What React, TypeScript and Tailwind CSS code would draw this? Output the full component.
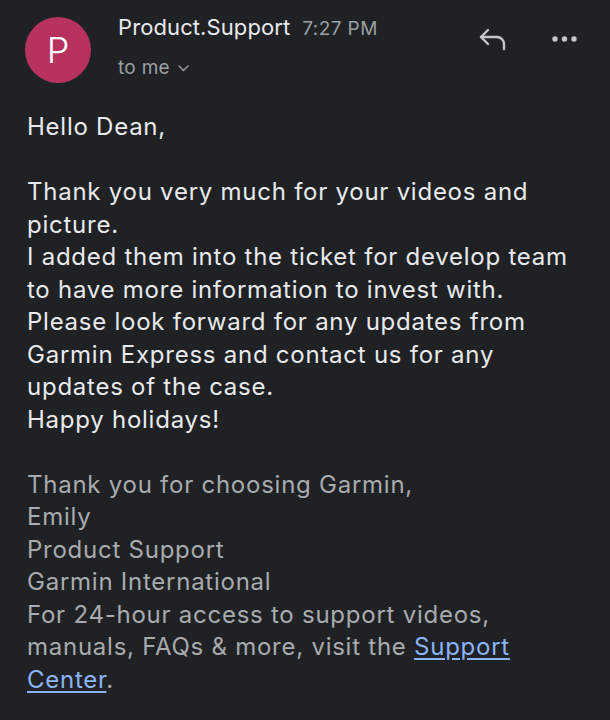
import React from 'react';

// lines as wrapped in the mail client
const body = [
  'Thank you very much for your videos and',
  'picture.',
  'I added them into the ticket for develop team',
  'to have more information to invest with.',
  'Please look forward for any updates from',
  'Garmin Express and contact us for any',
  'updates of the case.',
  'Happy holidays!',
];

const signature = [
  'Thank you for choosing Garmin,',
  'Emily',
  'Product Support',
  'Garmin International',
  'For 24-hour access to support videos,',
];

export default function App() {
  return (
    <div
      className="w-[610px] h-[720px] bg-[#202124] text-[#e8eaed] overflow-hidden"
      style={{ fontFamily: 'Inter, "Noto Sans", sans-serif' }}
    >
      {/* Header */}
      <div className="flex items-start pl-[25px] pr-[33px] pt-[17px]">
        <div className="w-[66px] h-[66px] rounded-full bg-[#b8325f] flex items-center justify-center text-white text-[36px] font-light shrink-0">
          P
        </div>
        <div className="ml-[27px] flex-1 mt-[-6px]">
          <div className="flex items-baseline gap-[12px]">
            <span className="text-[22px] tracking-[0.1px] text-[#e8eaed]">Product.Support</span>
            <span className="text-[19px] tracking-[0.4px] text-[#9aa0a6]">7:27 PM</span>
          </div>
          <div className="flex items-center gap-[8px] mt-[10px] text-[19px] tracking-[0.3px] text-[#9aa0a6]">
            <span>to me</span>
            <svg width="11" height="7" viewBox="0 0 11 7" fill="none">
              <path d="M1 1l4.5 4.5L10 1" stroke="#9aa0a6" strokeWidth="1.4" strokeLinecap="round" strokeLinejoin="round" />
            </svg>
          </div>
        </div>
        <div className="flex items-center gap-[44px] pt-[10px]">
          <svg width="30" height="24" viewBox="0 0 30 24" fill="none">
            <path d="M10 3L3 10l7 7" stroke="#c4c7c5" strokeWidth="2.4" strokeLinecap="round" strokeLinejoin="round" />
            <path d="M3 10h16a7 7 0 0 1 7 7v5" stroke="#c4c7c5" strokeWidth="2.4" strokeLinecap="round" />
          </svg>
          <svg width="25" height="6" viewBox="0 0 25 6" fill="#c4c7c5">
            <circle cx="3" cy="3" r="2.7" />
            <circle cx="12.5" cy="3" r="2.7" />
            <circle cx="22" cy="3" r="2.7" />
          </svg>
        </div>
      </div>

      {/* Body */}
      <div className="pl-[27px] pr-[20px] mt-[28px] text-[24px] leading-[32.5px] tracking-[0.75px] whitespace-nowrap">
        <p>Hello Dean,</p>
        <p>&nbsp;</p>
        {body.map(line => (
          <p key={line}>{line}</p>
        ))}
        <p>&nbsp;</p>
        <div className="text-[#a8abaf]">
          {signature.map(line => (
            <p key={line}>{line}</p>
          ))}
          <p>
            manuals, FAQs &amp; more, visit the{' '}
            <span className="text-[#8ab4f8] underline underline-offset-[3px]">Support</span>
          </p>
          <p>
            <span className="text-[#8ab4f8] underline underline-offset-[3px]">Center</span>.
          </p>
        </div>
      </div>
    </div>
  );
}
